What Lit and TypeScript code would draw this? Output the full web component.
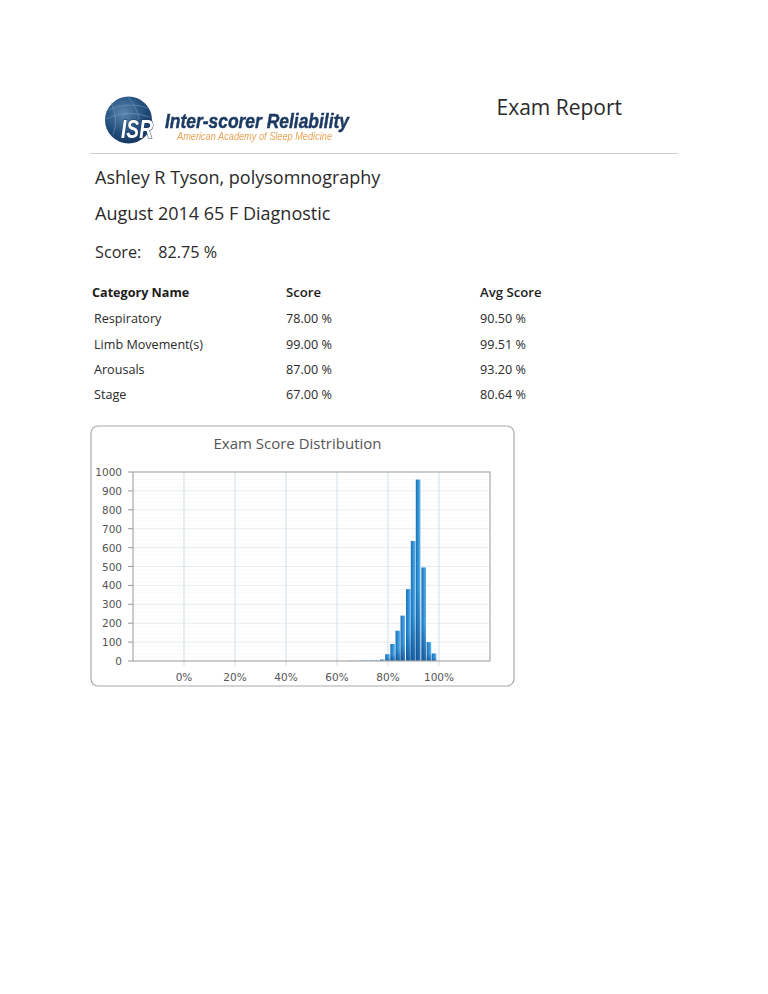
import {LitElement, html, css, svg} from 'lit';
import {customElement} from 'lit/decorators.js';

const rows = [
  ['Respiratory', '78.00 %', '90.50 %'],
  ['Limb Movement(s)', '99.00 %', '99.51 %'],
  ['Arousals', '87.00 %', '93.20 %'],
  ['Stage', '67.00 %', '80.64 %'],
];

// chart coordinates are relative to the card's svg (card starts at 90,425)
const plot = {left: 43, right: 400, top: 47, bottom: 236};
const yOf = (v: number) => plot.bottom - (v / 1000) * (plot.bottom - plot.top);
const xTicks = [94, 145, 196, 247, 298, 349];
const xLabels = ['0%', '20%', '40%', '60%', '80%', '100%'];
const bars = [
  {x: 259, v: 1}, {x: 264, v: 1}, {x: 269, v: 2}, {x: 274, v: 2}, {x: 280, v: 3},
  {x: 285, v: 3}, {x: 290, v: 8},
  {x: 295.2, v: 36}, {x: 300.3, v: 90}, {x: 305.5, v: 160}, {x: 310.5, v: 240},
  {x: 316, v: 380}, {x: 320.8, v: 635}, {x: 325.8, v: 960}, {x: 331.4, v: 495},
  {x: 336.6, v: 100}, {x: 341.7, v: 40},
];

@customElement('app-root')
export class AppRoot extends LitElement {
  static styles = css`
    :host {
      display: block;
      width: 768px;
      height: 994px;
      background: #fff;
      color: #2a2a2a;
      font-family: 'Open Sans', 'Noto Sans', sans-serif;
      box-sizing: border-box;
      padding: 92px 90px 0 90px;
    }

    .header {
      display: flex;
      justify-content: space-between;
      align-items: flex-start;
      height: 61px;
      border-bottom: 1px solid #cfcfcf;
    }

    .logo {
      display: block;
      margin: 1px 0 0 12px;
    }

    .title {
      font-size: 21px;
      line-height: 30px;
      margin: 0 56px 0 0;
    }

    .name {
      font-size: 18px;
      line-height: 26px;
      margin: 10px 0 0 5px;
    }

    .session {
      font-size: 18px;
      line-height: 26px;
      margin: 10px 0 0 5px;
    }

    .score {
      display: flex;
      gap: 17px;
      font-size: 16.2px;
      line-height: 24px;
      margin: 14px 0 0 5px;
    }

    .table {
      display: grid;
      grid-template-columns: 194px 194px 1fr;
      font-size: 12.6px;
      line-height: 25.3px;
      margin-top: 16px;
    }

    .table .head {
      font-weight: 700;
      padding-left: 2px;
      color: #1c1c1c;
    }

    .table .head.num {
      font-weight: 600;
      font-size: 13.2px;
    }

    .table .cell {
      padding-left: 4px;
      position: relative;
      top: 1px;
    }

    .table .cell.num {
      padding-left: 2px;
    }

    .chart {
      display: block;
      margin-top: 19px;
    }

    .chart text {
      font-family: 'DejaVu Sans', sans-serif;
      font-size: 10.5px;
      fill: #555;
    }

    .chart text.chart-title {
      font-family: 'Open Sans', sans-serif;
      font-size: 15px;
      fill: #555;
    }
  `;

  renderLogo() {
    return html`
      <svg class="logo" width="290" height="56" viewBox="0 0 290 56">
        <defs>
          <radialGradient id="globe" cx="0.4" cy="0.35" r="0.75">
            <stop offset="0" stop-color="#5b86ad"></stop>
            <stop offset="0.55" stop-color="#24507f"></stop>
            <stop offset="1" stop-color="#102f55"></stop>
          </radialGradient>
          <filter id="soft"><feGaussianBlur stdDeviation="0.4"></feGaussianBlur></filter>
        </defs>
        <g filter="url(#soft)">
          <circle cx="26.5" cy="27" r="23.5" fill="url(#globe)"></circle>
          <path d="M6 17 Q26 8 46 15 M4 26 Q24 16 48 24 M9 9 Q17 27 11 42 M26 4 Q35 14 37 26" fill="none" stroke="#8fb0cc" stroke-width="0.6" opacity="0.7"></path>
          <text x="19" y="45" font-family="Liberation Sans" font-weight="700" font-style="italic" font-size="25" textLength="32" lengthAdjust="spacingAndGlyphs" fill="#fff" stroke="#1c3a63" stroke-width="1.2" paint-order="stroke">ISR</text>
          <text x="63" y="35" font-family="Liberation Sans" font-weight="700" font-style="italic" font-size="21" textLength="184" lengthAdjust="spacingAndGlyphs" fill="#1c3a63" stroke="#1c3a63" stroke-width="0.45">Inter-scorer Reliability</text>
          <text x="75" y="47" font-family="Liberation Sans" font-style="italic" font-size="10" textLength="155" lengthAdjust="spacingAndGlyphs" fill="#e8a355">American Academy of Sleep Medicine</text>
        </g>
      </svg>
    `;
  }

  renderChart() {
    const minor = [];
    for (let v = 20; v < 1000; v += 20) {
      const major = v % 100 === 0;
      minor.push(svg`<line x1=${plot.left} x2=${plot.right} y1=${yOf(v)} y2=${yOf(v)}
        stroke=${major ? '#e6edf0' : '#f3f5f6'} stroke-width="1" stroke-dasharray=${major ? 'none' : '1 1'}></line>`);
    }
    const yLabels = [];
    for (let v = 0; v <= 1000; v += 100) {
      yLabels.push(svg`
        <line x1="38" x2=${plot.left} y1=${yOf(v)} y2=${yOf(v)} stroke="#999"></line>
        <text x="32" y=${yOf(v) + 4} text-anchor="end">${v}</text>`);
    }
    return html`
      <svg class="chart" width="426" height="263" viewBox="0 0 426 263">
        <defs>
          <linearGradient id="bar" x1="0" x2="1" y1="0" y2="0">
            <stop offset="0" stop-color="#1f6fb5"></stop>
            <stop offset="0.5" stop-color="#2f8fd6"></stop>
            <stop offset="1" stop-color="#5fb6ea"></stop>
          </linearGradient>
          <linearGradient id="shade" x1="0" x2="0" y1="0" y2="1">
            <stop offset="0.6" stop-color="#0b3f80" stop-opacity="0"></stop>
            <stop offset="1" stop-color="#0b3f80" stop-opacity="0.6"></stop>
          </linearGradient>
        </defs>
        <rect x="1" y="1" width="423" height="260" rx="7" fill="#fff" stroke="#aaa" stroke-width="1.2"></rect>
        <text class="chart-title" x="207.5" y="23.5" text-anchor="middle">Exam Score Distribution</text>
        ${minor}
        ${xTicks.map((x, i) => svg`
          <line x1=${x} x2=${x} y1=${plot.top} y2=${plot.bottom + 5} stroke="#d3dee6" stroke-width="1"></line>
          <text x=${x} y="256" text-anchor="middle">${xLabels[i]}</text>`)}
        ${bars.map(b => svg`
          <rect x=${b.x} y=${yOf(b.v)} width="4.6" height=${plot.bottom - yOf(b.v)} fill="url(#bar)"></rect>
          <rect x=${b.x} y=${yOf(b.v)} width="4.6" height=${plot.bottom - yOf(b.v)} fill="url(#shade)"></rect>`)}
        <rect x=${plot.left} y=${plot.top} width=${plot.right - plot.left} height=${plot.bottom - plot.top}
          fill="none" stroke="#a8a8a8" stroke-width="1.2"></rect>
        ${yLabels}
      </svg>
    `;
  }

  render() {
    return html`
      <div class="header">
        ${this.renderLogo()}
        <div class="title">Exam Report</div>
      </div>
      <div class="name">Ashley R Tyson, polysomnography</div>
      <div class="session">August 2014 65 F Diagnostic</div>
      <div class="score"><span>Score:</span><span>82.75 %</span></div>
      <div class="table">
        <div class="head">Category Name</div>
        <div class="head num">Score</div>
        <div class="head num">Avg Score</div>
        ${rows.map(r => html`
          <div class="cell">${r[0]}</div>
          <div class="cell num">${r[1]}</div>
          <div class="cell num">${r[2]}</div>
        `)}
      </div>
      ${this.renderChart()}
    `;
  }
}
